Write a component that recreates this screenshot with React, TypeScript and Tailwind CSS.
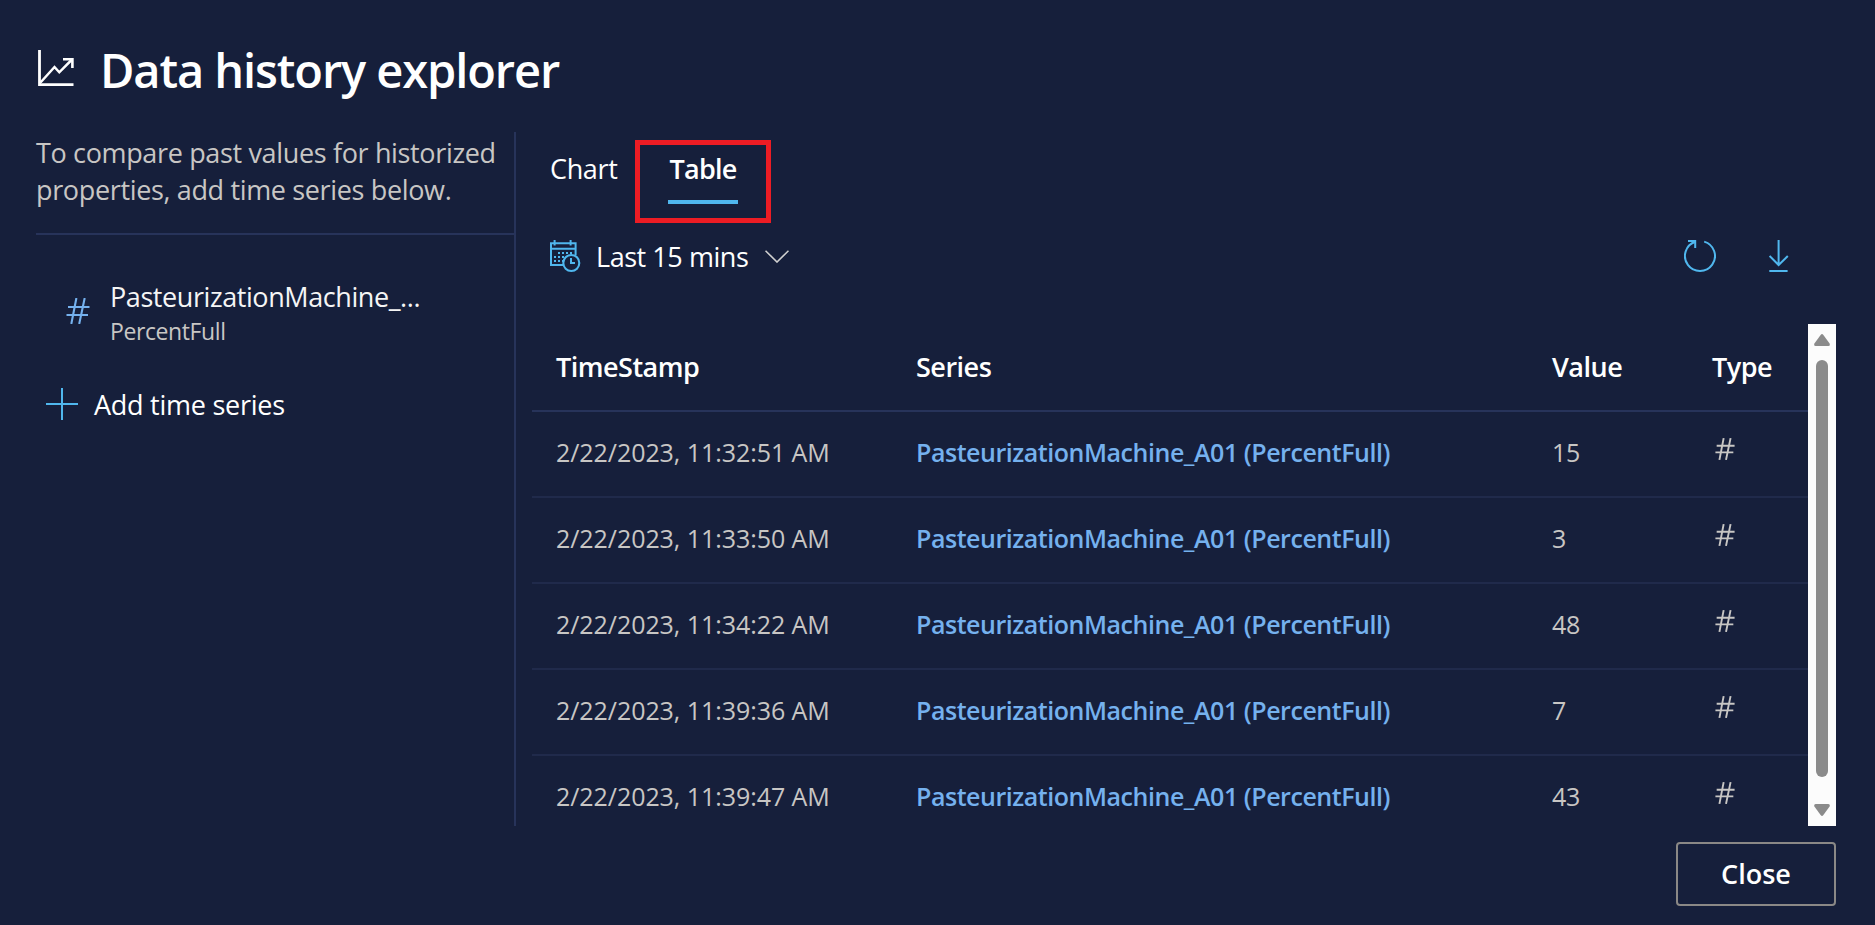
const rows = [
  { time: "2/22/2023, 11:32:51 AM", value: 15 },
  { time: "2/22/2023, 11:33:50 AM", value: 3 },
  { time: "2/22/2023, 11:34:22 AM", value: 48 },
  { time: "2/22/2023, 11:39:36 AM", value: 7 },
  { time: "2/22/2023, 11:39:47 AM", value: 43 },
];

function HashIcon({ className, strokeWidth }: { className: string; strokeWidth: number }) {
  return (
    <svg viewBox="0 0 24 26" fill="none" stroke="currentColor" strokeWidth={strokeWidth} className={className}>
      <path d="M10.4 0L5.3 26M18.7 0L13.2 26M2 9H23.5M.5 17H22" />
    </svg>
  );
}

function ChartIcon() {
  return (
    <svg viewBox="0 0 36 36" fill="none" stroke="currentColor" className="size-9 shrink-0">
      <path strokeWidth="2.8" d="M1.5 0V34.6H35.5" />
      <path strokeWidth="2.5" d="M2.5 32.5L16.5 17L21.3 22.3L34 9.5" />
      <path strokeWidth="2.6" d="M25 9.3H34.4V18" />
    </svg>
  );
}

function CalendarIcon() {
  return (
    <svg viewBox="0 0 33 33" fill="none" stroke="currentColor" className="size-[33px] shrink-0">
      <path strokeWidth="2" d="M14 25H2V3.2H26.6V15.2M2 8.8H26.6M5.6 0V5.6M21.6 0V5.6" />
      <path strokeWidth="2" d="M9 13h2M13 13h2M17 13h2M21 13h2M5 17h2M9 17h2M13 17h2M5 21h2M9 21h2M13 21h2" />
      <circle cx="22.3" cy="23" r="8" strokeWidth="2.1" />
      <path strokeWidth="2" d="M22 18V23H26" />
    </svg>
  );
}

function Sidebar() {
  return (
    <aside className="w-[480px] shrink-0 border-r-2 border-[#27335a]">
      <p className="border-b-2 border-[#27335a] pt-[1.5px] pb-[25.5px] text-[27px] leading-[37px] tracking-[-0.35px] whitespace-nowrap text-[#c8c6c4]">
        To compare past values for historized
        <br />
        properties, add time series below.
      </p>
      <div className="mt-[43px] flex pl-[30px]">
        <HashIcon className="mt-5 h-[26px] w-6 text-[#75b1ee]" strokeWidth={2.1} />
        <div className="ml-5">
          <div className="text-[27px] leading-[37px] tracking-[-0.42px] text-[#f5f5f5]">PasteurizationMachine_...</div>
          <div className="text-[23px] leading-8 tracking-[-0.4px] text-[#c8c6c4]">PercentFull</div>
        </div>
      </div>
      <button className="mt-[38px] flex h-[39px] items-center pl-[10px] text-[27px] tracking-[-0.25px] text-white">
        <svg viewBox="0 0 32 32" stroke="currentColor" strokeWidth="2" className="-mt-px size-8 text-[#50b7ee]">
          <path d="M16 0V32M0 16H32" />
        </svg>
        <span className="mt-0.5 ml-4">Add time series</span>
      </button>
    </aside>
  );
}

function Tabs() {
  return (
    <nav className="flex h-[72px] pt-5 pl-[34px] text-[27px] leading-[33px] text-white">
      <div className="w-[118px] tracking-[-0.36px]">Chart</div>
      <div className="relative w-[70px] border-b-4 border-[#50b7ee] pl-[1.5px] font-semibold tracking-[-0.75px]">
        Table
        <div className="absolute -top-3 -left-[33px] h-[83px] w-[136px] border-5 border-[#ed1c24]" />
      </div>
    </nav>
  );
}

function Toolbar() {
  return (
    <div className="mt-9 flex h-8 items-center pr-[47px] pl-[33px] text-[#50b7ee]">
      <CalendarIcon />
      <span className="mt-0.5 ml-[14px] text-[27px] leading-8 tracking-[-0.45px] text-white">Last 15 mins</span>
      <svg viewBox="0 0 24 13" fill="none" stroke="#d0d0d0" strokeWidth="1.6" className="ml-[17px] h-[13px] w-6">
        <path d="M.5 .7L12 12L23.5 .7" />
      </svg>
      <svg viewBox="0 0 32 32" fill="none" stroke="currentColor" strokeWidth="2" className="ml-auto size-8">
        <path d="M20.2 1.6A15 15 0 1 1 11.4 1.7" />
        <path d="M4 1H11.2V8" />
      </svg>
      <svg viewBox="0 0 20 32" fill="none" stroke="currentColor" strokeWidth="2" className="ml-[53px] h-8 w-5">
        <path d="M9.6 0V25M.6 16L9.6 25L18.8 16M.3 31H18.6" />
      </svg>
    </div>
  );
}

function Scrollbar() {
  return (
    <div className="flex w-7 shrink-0 flex-col items-center bg-[#fcfcfc] py-[10px]">
      <svg viewBox="0 0 16 12" className="h-3 w-4 fill-[#8b8b8b]">
        <path d="M6.6 .9Q8 -.8 9.4 .9L15.6 9.6Q16.4 11.8 14.4 12H1.6Q-.4 11.8 .4 9.6Z" />
      </svg>
      <div className="mt-[14px] h-[417px] w-3 rounded-full bg-[#8b8b8b]" />
      <svg viewBox="0 0 16 12" className="mt-auto h-3 w-4 fill-[#8b8b8b]">
        <path d="M6.6 11.1Q8 12.8 9.4 11.1L15.6 2.4Q16.4 .2 14.4 0H1.6Q-.4 .2 .4 2.4Z" />
      </svg>
    </div>
  );
}

function HistoryTable() {
  return (
    <div className="mt-[52px] ml-4 flex h-[502px]">
      <div className="flex-1 overflow-hidden">
        <div className="grid h-[88px] grid-cols-[360px_636px_160px_1fr] items-center border-b-2 border-[#27335a] pl-6 text-[27px] font-semibold tracking-[-0.5px] text-white">
          <span>TimeStamp</span>
          <span>Series</span>
          <span>Value</span>
          <span>Type</span>
        </div>
        {rows.map((row) => (
          <div
            key={row.time}
            className="grid h-[86px] grid-cols-[360px_636px_160px_1fr] items-center border-b-2 border-[#202a4b] pb-[2px] pl-6 text-[25px] text-[#c8c6c4]"
          >
            <span className="tracking-[-0.06px]">{row.time}</span>
            <span className="font-semibold tracking-[-0.46px] text-[#75b1ee]">PasteurizationMachine_A01 (PercentFull)</span>
            <span className="tracking-[-0.3px]">{row.value}</span>
            <HashIcon className="-mt-[9px] ml-[3px] h-[22px] w-5" strokeWidth={2.3} />
          </div>
        ))}
      </div>
      <Scrollbar />
    </div>
  );
}

export default function App() {
  return (
    <div className="h-[925px] w-full overflow-hidden bg-[#161f3b] pr-[39px] pl-9 font-['Open_Sans','Noto_Sans',sans-serif]">
      <header className="flex h-[132px] items-start pt-[38px] pl-[2px] text-white">
        <div className="mt-3">
          <ChartIcon />
        </div>
        <h1 className="ml-[26px] text-[47px] leading-[64px] font-semibold tracking-[-1.1px]">Data history explorer</h1>
      </header>
      <main className="flex h-[694px]">
        <Sidebar />
        <section className="flex-1">
          <Tabs />
          <Toolbar />
          <HistoryTable />
        </section>
      </main>
      <footer className="mt-4 flex justify-end">
        <button className="h-16 w-40 rounded border-2 border-[#8a8886] pt-px text-[27px] font-semibold text-white">Close</button>
      </footer>
    </div>
  );
}
